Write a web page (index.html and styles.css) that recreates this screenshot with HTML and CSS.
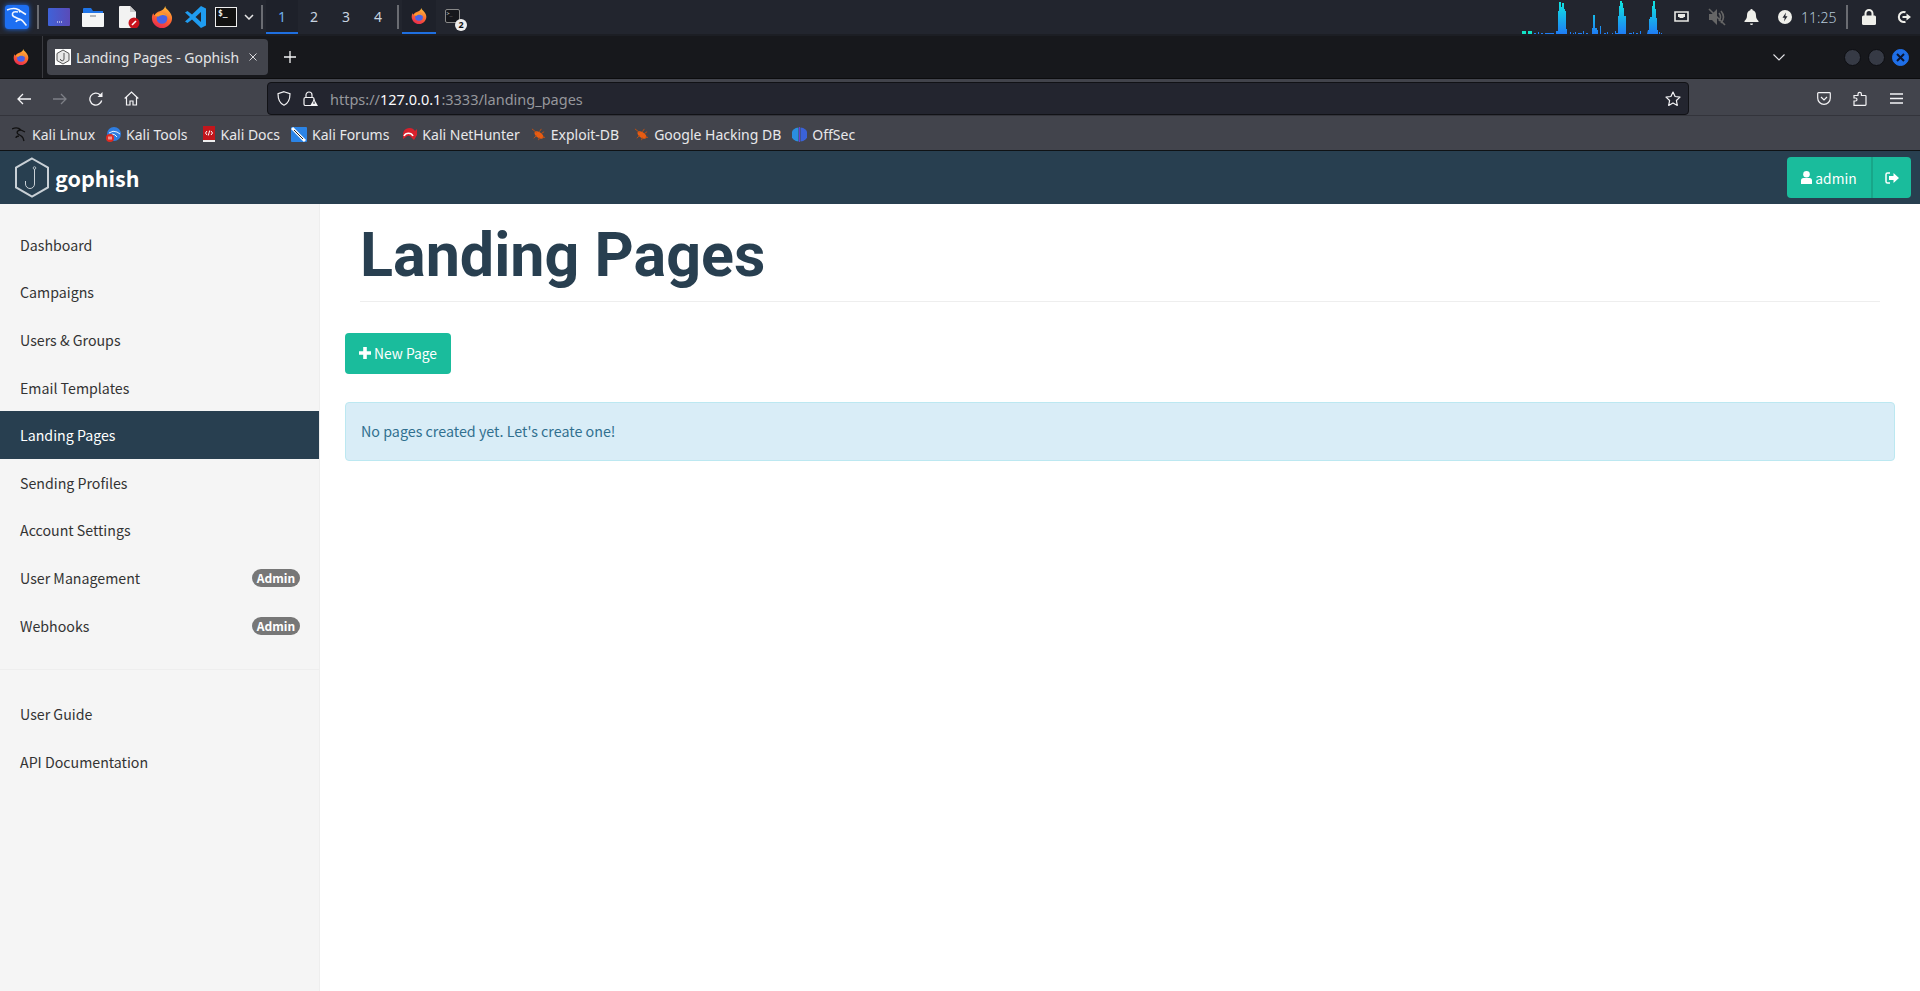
FILE: index.html

```html
<!DOCTYPE html>
<html lang="en">

<head>
    <meta charset="UTF-8">
    <meta name="viewport" content="width=device-width, initial-scale=1.0">
    <title>Landing Pages - Gophish</title>

    <link rel="stylesheet" href="styles.css">
</head>

<body>
    <!-- shared icons -->
    <svg class="defs" width="0" height="0">
        <defs>
            <linearGradient id="ffOuter" x1="0.7" y1="0" x2="0.3" y2="1">
                <stop offset="0" stop-color="#ffc23a" />
                <stop offset="0.5" stop-color="#ff6a30" />
                <stop offset="1" stop-color="#e8274f" />
            </linearGradient>
            <linearGradient id="barFill" x1="0" y1="0" x2="0" y2="1">
                <stop offset="0" stop-color="#10e8e0" />
                <stop offset="1" stop-color="#1f7cf5" />
            </linearGradient>
            <symbol id="firefox" viewBox="0 0 24 24">
                <path fill="url(#ffOuter)" d="M15.500 0c.2 2.800 2.800 3.500 4.800 6.500 1.300 1.900 2.700 4 2.700 6.500 0 6-4.900 11-11 11S1 19 1 13c0-2 .5-3.700 1.500-5.200.3 1 .8 1.700 1.500 2.200C5 8 7 6.500 9.500 5.800 12 5 14.800 3.200 15.500 0z" />
                <circle cx="12" cy="13.500" r="5.800" fill="#4a62e6" />
                <path fill="#ff9a2a" d="M4 10c2-2.500 5.500-3.500 8.500-2.700 3 .6 5 2.800 5.500 5-1.500-2-4-2.700-6.500-2.200-1 .2-2.200.3-3 1.400-1.800 0-3.500-.5-4.500-1.500z" />
            </symbol>
            <symbol id="roach" viewBox="0 0 16 16">
                <ellipse cx="8.500" cy="8.500" rx="5.500" ry="3" transform="rotate(35 8.500 8.500)" fill="#e85c12" />
                <path d="M1 2l5 4M3 12l3-3M8 14l1-3M14 5l-3 2M11 2L9 5M15 11h-3" stroke="#c5500f" stroke-width="1" fill="none" />
            </symbol>
        </defs>
    </svg>

    <!-- desktop panel -->
    <div class="panel">
        <div class="panel-left">
            <span class="launcher launcher-kali">
                <svg width="24" height="24" viewBox="0 0 24 24">
                    <rect width="24" height="24" rx="3" fill="#1d6ff2" />
                    <path d="M2 5c5-2 8-2 11-.5 2 1 4 3 8 5M14 4.500l1 3M13 7c-4-1-6 .5-5.500 3 .5 2.500 6 3 9 5 2 1.400 3 3.500 5 5.500M15 15c-2-.5-3.500.5-4 2" fill="none" stroke="#f2f7ff" stroke-width="1.600" />
                </svg>
            </span>
            <span class="panel-sep sep-first"></span>
            <span class="launcher launcher-screen">
                <svg width="22" height="18" viewBox="0 0 22 18">
                    <defs>
                        <linearGradient id="screenFill" x1="0" y1="0" x2="1" y2="0">
                            <stop offset="0" stop-color="#3f62d8" />
                            <stop offset="1" stop-color="#5a4bb8" />
                        </linearGradient>
                    </defs>
                    <rect width="22" height="18" rx="1" fill="url(#screenFill)" />
                    <path d="M9 14h1M11 14h1M13 14h1" stroke="#fff" stroke-width="1.200" />
                </svg>
            </span>
            <span class="launcher launcher-folder">
                <svg width="22" height="20" viewBox="0 0 22 20">
                    <path d="M1 2q0-1 1-1h7l2 3h10v3H1z" fill="#1f74e8" />
                    <path d="M0 6h22v13q0 1-1 1H1q-1 0-1-1z" fill="#f4f5f5" />
                    <path d="M8 9h6" stroke="#8b8f94" stroke-width="1.200" />
                </svg>
            </span>
            <span class="launcher launcher-file">
                <svg width="22" height="22" viewBox="0 0 22 22">
                    <path d="M1 1q0-1 1-1h10l6 6v15q0 1-1 1H2q-1 0-1-1z" fill="#f2f2f2" />
                    <path d="M12 0l6 6h-6z" fill="#c8c8c8" />
                    <circle cx="16" cy="17" r="5.500" fill="#c9131c" />
                    <path d="M14 19l4-4" stroke="#fff" stroke-width="1.600" />
                </svg>
            </span>
            <span class="launcher launcher-ff">
                <svg width="22" height="22"><use href="#firefox" /></svg>
            </span>
            <span class="launcher launcher-code">
                <svg width="22" height="22" viewBox="0 0 22 22">
                    <path d="M16 0l5 2.500v17L16 22 7 13.500 2.500 17 0 15.500 5 11 0 6.500 2.500 5 7 8.500zM16 6l-5.500 5 5.500 5z" fill="#1f9cf0" />
                </svg>
            </span>
            <span class="launcher launcher-term">$_</span>
            <svg class="panel-chevron" width="10" height="6" viewBox="0 0 10 6">
                <path d="M1 1l4 4 4-4" fill="none" stroke="#e6e6e6" stroke-width="1.500" />
            </svg>
            <span class="panel-sep sep-second"></span>
            <div class="workspaces">
                <span class="workspace workspace-active">1</span>
                <span class="workspace">2</span>
                <span class="workspace">3</span>
                <span class="workspace">4</span>
            </div>
            <span class="panel-sep sep-third"></span>
            <span class="window-btn window-btn-active">
                <svg width="16" height="16"><use href="#firefox" /></svg>
            </span>
            <span class="window-btn window-btn-term">
                <span class="term-mini">&gt;_</span>
                <span class="term-count">2</span>
            </span>
        </div>
        <div class="panel-right">
            <svg class="cpu-graph" width="140" height="34" viewBox="0 0 140 34">
                <path fill="#12e3c6" d="M0 31h4v3H0zM6 31h4v3H6z" />
                <path fill="url(#barFill)" d="M12 33h2v1h-2zM16 32h1v2h-1zM19 33h2v1h-2zM23 33h9v1h-9zM34 31h2v-20h1V2h2v5h1V3h2v6h1v2h1v18h1v5H34zM48 32h1v2h-1zM51 33h1v1h-1zM53 32h1v2h-1zM56 33h4v1h-4zM61 31h1v3h-1zM64 33h2v1h-2zM70 28h1V15h2v13h2v6h-5zM75 30h1v4h-1zM78 26h1v8h-1zM82 33h2v1h-2zM85 32h1v2h-1zM90 33h1v1h-1zM93 31h1v3h-1zM94 33h2v-17h1V6h1V1h2v2h1v5h1v8h2v18h-11zM107 33h3v1h-3zM111 32h1v2h-1zM114 33h2v1h-2zM118 31h1v3h-1zM126 30h1v-11h1v-2h2V6h1V1h2v8h1v9h1v12h1v4h-11zM137 32h1v2h-1zM139 33h1v1h-1z" />
            </svg>
            <svg class="tray-icon tray-net" width="15" height="13" viewBox="0 0 15 13">
                <path d="M1 1h13v9H1z" fill="none" stroke="#e8e8e4" stroke-width="1.600" />
                <path d="M4 3h7v3H9.500v1h-4V6H4z" fill="#e8e8e4" />
            </svg>
            <svg class="tray-icon tray-mute" width="18" height="18" viewBox="0 0 18 18">
                <path d="M1 6h3l5-5v16l-5-5H1z" fill="#666" />
                <path d="M11 5q3 4 0 8M13 3q5 6 0 12M1 1l16 16" fill="none" stroke="#666" stroke-width="1.600" />
            </svg>
            <svg class="tray-icon tray-bell" width="15" height="16" viewBox="0 0 15 16">
                <path d="M7.500 0q1.200 0 1.200 1.300c2.500.7 3.300 2.800 3.300 5.200 0 2.500.8 3.900 2.500 5.500v1H.5v-1C2.200 10.400 3 9 3 6.500c0-2.400.8-4.500 3.300-5.200Q6.300 0 7.500 0zM6 14.500h3a1.500 1.500 0 0 1-3 0z" fill="#efefea" />
            </svg>
            <svg class="tray-icon tray-power" width="14" height="14" viewBox="0 0 14 14">
                <circle cx="7" cy="7" r="7" fill="#efefea" />
                <path d="M8 2.500L4.500 7.800h2.200L6 11.500l3.500-5.300H7.300z" fill="#23262f" />
            </svg>
            <span class="tray-clock">11:25</span>
            <span class="panel-sep sep-tray"></span>
            <svg class="tray-icon tray-lock" width="14" height="16" viewBox="0 0 14 16">
                <path d="M3.500 7V4.500a3.500 3.500 0 0 1 7 0V7" fill="none" stroke="#efefea" stroke-width="2" />
                <rect y="6.500" width="14" height="9.500" rx="1.500" fill="#efefea" />
            </svg>
            <svg class="tray-icon tray-logout" width="14" height="14" viewBox="0 0 14 14">
                <path d="M8.500 2.300a5 5 0 1 0 0 9.400" fill="none" stroke="#efefea" stroke-width="2" />
                <path d="M5.500 6h4V3.500L14 7l-4.500 3.500V8h-4z" fill="#efefea" />
            </svg>
        </div>
    </div>

    <!-- browser tab strip -->
    <div class="tabstrip">
        <span class="tabstrip-ff">
            <svg width="16" height="16"><use href="#firefox" /></svg>
        </span>
        <div class="tab">
            <span class="tab-favicon">
                <svg width="16" height="16" viewBox="0 0 16 16">
                    <rect width="16" height="16" fill="#fff" />
                    <path d="M8 1l6 3.500v7L8 15l-6-3.500v-7z" fill="#e8e8e8" stroke="#555" stroke-width="1" />
                    <path d="M9 4v6a1.800 1.800 0 0 1-3.600 0" fill="none" stroke="#555" stroke-width="1" />
                </svg>
            </span>
            <span class="tab-title">Landing Pages - Gophish</span>
            <svg class="tab-close" width="8" height="8" viewBox="0 0 8 8">
                <path d="M.5.500l7 7M7.500.500l-7 7" stroke="#d8d8dc" stroke-width="1" />
            </svg>
        </div>
        <svg class="tab-new" width="12" height="12" viewBox="0 0 12 12">
            <path d="M6 0v12M0 6h12" stroke="#f4f4f6" stroke-width="1.300" />
        </svg>
        <svg class="tab-list" width="12" height="7" viewBox="0 0 12 7">
            <path d="M.5.500L6 6 11.500.500" fill="none" stroke="#e4e4e8" stroke-width="1.100" />
        </svg>
        <div class="win-controls">
            <span class="win-dot"></span>
            <span class="win-dot"></span>
            <span class="win-dot win-dot-close">
                <svg width="9" height="9" viewBox="0 0 9 9">
                    <path d="M1 1l7 7M8 1L1 8" stroke="#0b1530" stroke-width="2" />
                </svg>
            </span>
        </div>
    </div>

    <!-- navigation toolbar -->
    <div class="toolbar">
        <svg class="tool tool-back" width="14" height="12" viewBox="0 0 14 12">
            <path d="M14 6H1M6 1L1 6l5 5" fill="none" stroke="#f4f4f6" stroke-width="1.300" />
        </svg>
        <svg class="tool tool-forward" width="14" height="12" viewBox="0 0 14 12">
            <path d="M0 6h13M8 1l5 5-5 5" fill="none" stroke="#7d7f86" stroke-width="1.300" />
        </svg>
        <svg class="tool tool-reload" width="14" height="14" viewBox="0 0 14 14">
            <path d="M12.700 8.500A6 6 0 1 1 11 2.700" fill="none" stroke="#f4f4f6" stroke-width="1.300" />
            <path d="M13.500 0v5h-5z" fill="#f4f4f6" />
        </svg>
        <svg class="tool tool-home" width="15" height="15" viewBox="0 0 15 15">
            <path d="M.7 7.500L7.500 1l6.800 6.500M2.500 6v8h3.500v-4h3v4h3.500V6" fill="none" stroke="#f4f4f6" stroke-width="1.200" />
        </svg>
        <div class="urlbar">
            <svg class="url-shield" width="14" height="15" viewBox="0 0 14 15">
                <path d="M7 .7l6 2c0 5.500-1.500 9.500-6 11.500C2.500 12.200 1 8.200 1 2.700z" fill="none" stroke="#f4f4f6" stroke-width="1.200" />
            </svg>
            <svg class="url-lock" width="15" height="15" viewBox="0 0 15 15">
                <path d="M3 7V4a3 3 0 0 1 6 0v3" fill="none" stroke="#f4f4f6" stroke-width="1.200" />
                <rect x="1" y="6.500" width="10" height="8" rx="1.500" fill="none" stroke="#f4f4f6" stroke-width="1.200" />
                <path d="M11 8l4 7H7z" fill="#f4f4f6" />
                <path d="M11 10.500v2.500" stroke="#23252f" stroke-width="1" />
            </svg>
            <span class="url-text"><span class="url-dim">https://</span>127.0.0.1<span class="url-dim">:3333/landing_pages</span></span>
            <svg class="url-star" width="16" height="15" viewBox="0 0 16 15">
                <path d="M8 1l2.100 4.500 4.900.6-3.600 3.400.9 4.900L8 11.900l-4.300 2.500.9-4.900L1 6.100l4.900-.6z" fill="none" stroke="#f4f4f6" stroke-width="1.200" stroke-linejoin="round" />
            </svg>
        </div>
        <svg class="tool tool-pocket" width="14" height="13" viewBox="0 0 14 13">
            <path d="M1.500.700h11q.8 0 .8.800v4.500a6.300 6.300 0 0 1-12.600 0V1.500q0-.8.800-.8z" fill="none" stroke="#f4f4f6" stroke-width="1.200" />
            <path d="M4 5l3 3 3-3" fill="none" stroke="#f4f4f6" stroke-width="1.200" />
        </svg>
        <svg class="tool tool-ext" width="14" height="15" viewBox="0 0 14 15">
            <path d="M1 14.300V10h1.500a1.500 1.500 0 0 0 0-3H1V4.500h4V3a1.700 1.700 0 0 1 3.400 0v1.500h3.900a.7.700 0 0 1 .7.700v8.400a.7.700 0 0 1-.7.700z" fill="none" stroke="#f4f4f6" stroke-width="1.200" />
        </svg>
        <svg class="tool tool-menu" width="13" height="11" viewBox="0 0 13 11">
            <path d="M0 1h13M0 5.500h13M0 10h13" stroke="#f4f4f6" stroke-width="1.300" />
        </svg>
    </div>

    <!-- bookmarks toolbar -->
    <div class="bookmarks">
        <a class="bookmark bm-linux">
            <svg width="15" height="15" viewBox="0 0 15 15">
                <path d="M0 2c4-2 7-1 9 1l4 2M9 3C6 3 4 5 6 7c2 1 4 2 5 4l1 3M7 9c-2 0-3 1-3 2" fill="none" stroke="#111" stroke-width="1.300" />
            </svg>
            Kali Linux
        </a>
        <a class="bookmark bm-tools">
            <svg width="15" height="15" viewBox="0 0 15 15">
                <circle cx="8" cy="7" r="7" fill="#2f7de0" />
                <path d="M3 6q4-3 8-1l3 2M6 7q3 0 5 3" fill="none" stroke="#e8f3ff" stroke-width="1" />
                <circle cx="4" cy="11" r="4" fill="#e02b20" />
                <path d="M3 9.500v3M5 9.500v3" stroke="#fff" stroke-width="1" />
            </svg>
            Kali Tools
        </a>
        <a class="bookmark bm-docs">
            <svg width="15" height="16" viewBox="0 0 15 16">
                <rect x="2" width="12" height="14" fill="#c3161c" />
                <rect x="2" y="14" width="12" height="2" fill="#eee" />
                <path d="M6 5L4.500 7 6 9M10 5l1.500 2L10 9M8.700 4.500L7.300 9.500" fill="none" stroke="#fff" stroke-width="1" />
            </svg>
            Kali Docs
        </a>
        <a class="bookmark bm-forums">
            <svg width="16" height="15" viewBox="0 0 16 15">
                <rect width="16" height="15" rx="1" fill="#2b84e6" />
                <path d="M1 1l13 13" stroke="#fff" stroke-width="3" />
                <path d="M3 3l9 9" stroke="#222" stroke-width="1" />
            </svg>
            Kali Forums
        </a>
        <a class="bookmark bm-hunter">
            <svg width="15" height="14" viewBox="0 0 15 14">
                <path d="M1 7a6.500 6.500 0 0 1 12-3l2-2v6l-3 5-3-3a3 3 0 0 0-5 0l-3 2z" fill="#d8202c" />
                <path d="M2 9a5 5 0 0 1 9 0" fill="none" stroke="#fff" stroke-width="1.500" />
            </svg>
            Kali NetHunter
        </a>
        <a class="bookmark bm-exploit">
            <svg width="15" height="15"><use href="#roach" /></svg>
            Exploit-DB
        </a>
        <a class="bookmark bm-ghdb">
            <svg width="15" height="15"><use href="#roach" /></svg>
            Google Hacking DB
        </a>
        <a class="bookmark bm-offsec">
            <svg width="15" height="15" viewBox="0 0 15 15">
                <path d="M6.500.500v14A7 7 0 0 1 6.500.500z" fill="#2a8ee0" />
                <path d="M8.500.500v14a7 7 0 0 0 0-14z" fill="#3a62d8" />
                <path d="M7.500 0v15" stroke="#6a3fd0" stroke-width="1" />
            </svg>
            OffSec
        </a>
    </div>

    <!-- gophish navbar -->
    <nav class="navbar">
        <a class="brand">
            <svg width="36" height="41" viewBox="0 0 36 41">
                <path d="M18 1.500l16 9.200v19.600l-16 9.200-16-9.200V10.700z" fill="none" stroke="#c9d0d6" stroke-width="2" />
                <path d="M20.500 12v15a4.500 4.500 0 0 1-9 0v-3" fill="none" stroke="#c9d0d6" stroke-width="1" />
                <circle cx="20.500" cy="11" r="1.300" fill="none" stroke="#c9d0d6" stroke-width="0.800" />
            </svg>
            <span class="brand-name">gophish</span>
        </a>
        <div class="user-group">
            <button class="user-btn user-btn-name">
                <svg width="11" height="13" viewBox="0 0 11 13">
                    <circle cx="5.500" cy="3.300" r="3.300" fill="#fff" />
                    <path d="M0 13V9.500Q0 7 2.500 7h6Q11 7 11 9.500V13z" fill="#fff" />
                </svg>
                admin
            </button>
            <button class="user-btn user-btn-logout">
                <svg width="14" height="12" viewBox="0 0 14 12">
                    <path d="M5 1H2.500Q1 1 1 2.500v7Q1 11 2.500 11H5" fill="none" stroke="#fff" stroke-width="1.500" />
                    <path d="M4 4h4.500V1L14 6l-5.500 5V8H4z" fill="#fff" />
                </svg>
            </button>
        </div>
    </nav>

    <div class="app">
        <aside class="sidebar">
            <ul class="side-nav">
                <li><a>Dashboard</a></li>
                <li><a>Campaigns</a></li>
                <li><a>Users &amp; Groups</a></li>
                <li><a>Email Templates</a></li>
                <li class="active"><a>Landing Pages</a></li>
                <li><a>Sending Profiles</a></li>
                <li><a>Account Settings</a></li>
                <li><a>User Management <span class="badge">Admin</span></a></li>
                <li><a>Webhooks <span class="badge">Admin</span></a></li>
            </ul>
            <ul class="side-nav side-nav-help">
                <li><a>User Guide</a></li>
                <li><a>API Documentation</a></li>
            </ul>
        </aside>

        <main class="content">
            <h1 class="page-header">Landing Pages</h1>
            <button class="btn-new">
                <svg width="12" height="12" viewBox="0 0 12 12">
                    <path d="M6 0v12M0 6h12" stroke="#fff" stroke-width="3.600" />
                </svg>
                New Page
            </button>
            <div class="alert">No pages created yet. Let's create one!</div>
        </main>
    </div>
</body>

</html>
```

FILE: styles.css

```css
* {
    box-sizing: border-box;
}

html, body {
    height: 100%;
}

body {
    margin: 0;
    overflow: hidden;
    display: flex;
    flex-direction: column;
    font-family: "Noto Sans CJK JP", "Noto Sans", sans-serif;
    background-color: #fff;
}

svg {
    display: block;
    flex-shrink: 0;
}

.defs {
    position: absolute;
}

/* desktop panel */
.panel {
    height: 34px;
    display: flex;
    justify-content: space-between;
    background-color: #22252e;
    font-family: "Noto Sans", sans-serif;
}

.panel-left, .panel-right {
    display: flex;
    align-items: center;
}

.launcher {
    display: flex;
    align-items: center;
    justify-content: center;
}

.launcher-kali {
    margin-left: 5px;
    box-shadow: 0 0 5px #1d6ff2;
    border-radius: 3px;
}

.panel-sep {
    width: 2px;
    height: 24px;
    background-color: #6a6c72;
}

.sep-first {
    margin-left: 8px;
}

.launcher-screen {
    margin-left: 9px;
}

.launcher-folder {
    margin-left: 12px;
}

.launcher-file {
    margin-left: 14px;
}

.launcher-ff {
    margin-left: 11px;
}

.launcher-code {
    margin-left: 12px;
}

.launcher-term {
    margin-left: 8px;
    width: 22px;
    height: 20px;
    background-color: #111;
    border: 1px solid #eee;
    color: #eee;
    font-family: "DejaVu Sans Mono", monospace;
    font-size: 8px;
    font-weight: bold;
    align-items: flex-start;
    justify-content: flex-start;
    padding: 1px 0 0 2px;
}

.panel-chevron {
    margin-left: 7px;
}

.sep-second {
    margin-left: 7px;
}

.workspaces {
    display: flex;
    margin-left: 3px;
}

.workspace {
    width: 32px;
    height: 34px;
    display: flex;
    align-items: center;
    justify-content: center;
    color: #c8d4e0;
    font-size: 14px;
    border-bottom: 2px solid transparent;
    padding-top: 1px;
}

.workspace-active {
    color: #6fb0ee;
    border-bottom-color: #1f6fe0;
    background-color: #1e212a;
}

.sep-third {
    margin-left: 3px;
}

.window-btn {
    width: 34px;
    height: 34px;
    display: flex;
    align-items: center;
    justify-content: center;
    border-bottom: 2px solid transparent;
}

.window-btn-active {
    margin-left: 3px;
    background-color: #1e212a;
    border-bottom-color: #1f6fe0;
}

.window-btn-term {
    margin-left: 0;
    position: relative;
}

.term-mini {
    width: 15px;
    height: 14px;
    border: 1px solid #888;
    border-radius: 2px;
    background-color: #16171c;
    color: #ccc;
    font-family: "DejaVu Sans Mono", monospace;
    font-size: 5px;
    line-height: 7px;
    padding-left: 1px;
    margin-right: 2px;
}

.term-count {
    position: absolute;
    left: 19px;
    top: 19px;
    width: 12px;
    height: 12px;
    border-radius: 50%;
    background-color: #eee;
    color: #111;
    font-size: 9px;
    font-weight: bold;
    line-height: 12px;
    text-align: center;
}

.cpu-graph {
    margin-right: 11px;
}

.tray-net {
    margin-left: 1px;
}

.tray-mute {
    margin-left: 19px;
}

.tray-bell {
    margin-left: 18px;
}

.tray-power {
    margin-left: 19px;
}

.tray-clock {
    margin-left: 9px;
    color: #b6c8d8;
    font-size: 14px;
    font-weight: 300;
    width: 33px;
}

.sep-tray {
    margin-left: 12px;
}

.tray-lock {
    margin-left: 14px;
}

.tray-logout {
    margin-left: 21px;
    margin-right: 9px;
}

/* tab strip */
.tabstrip {
    height: 45px;
    display: flex;
    align-items: center;
    background-color: #17181c;
    border-top: 2px solid #1c1e24;
    border-bottom: 1px solid #0c0c0e;
    font-family: "Noto Sans", sans-serif;
}

.tabstrip-ff {
    width: 43px;
    height: 100%;
    display: flex;
    align-items: center;
    justify-content: center;
    border-right: 1px solid #3a3b40;
}

.tab {
    width: 221px;
    height: 36px;
    margin-left: 4px;
    display: flex;
    align-items: center;
    padding: 0 11px 0 8px;
    background-color: #42444c;
    border-radius: 4px;
}

.tab-title {
    margin-left: 5px;
    flex: 1;
    color: #e4e4e6;
    font-size: 14px;
}

.tab-new {
    margin-left: 16px;
}

.tab-list {
    margin-left: auto;
}

.win-controls {
    display: flex;
    gap: 7px;
    margin-left: 59px;
    margin-right: 11px;
}

.win-dot {
    width: 17px;
    height: 17px;
    border-radius: 50%;
    background-color: #363a45;
    border: 1px solid #0d0e12;
    display: flex;
    align-items: center;
    justify-content: center;
}

.win-dot-close {
    background-color: #1f6fe8;
    border-color: #1f6fe8;
}

/* toolbar */
.toolbar {
    height: 36px;
    display: flex;
    align-items: center;
    background-color: #42444c;
    padding-top: 3px;
}

.tool-back {
    margin-left: 17px;
}

.tool-forward {
    margin-left: 22px;
}

.tool-reload {
    margin-left: 22px;
}

.tool-home {
    margin-left: 21px;
}

.urlbar {
    width: 1422px;
    height: 33px;
    margin-left: 128px;
    display: flex;
    align-items: center;
    padding: 0 7px 0 9px;
    background-color: #23252f;
    border: 1px solid #111216;
    border-radius: 4px;
}

.url-lock {
    margin-left: 12px;
}

.url-text {
    margin-left: 12px;
    flex: 1;
    color: #fbfbfe;
    font-family: "Noto Sans", sans-serif;
    font-size: 14.5px;
    padding-top: 1px;
}

.url-dim {
    color: #96979c;
}

.tool-pocket {
    margin-left: 128px;
}

.tool-ext {
    margin-left: 22px;
}

.tool-menu {
    margin-left: 23px;
}

/* bookmarks */
.bookmarks {
    height: 35px;
    display: flex;
    align-items: center;
    padding-left: 12px;
    background-color: #42444c;
    border-top: 1px solid #33343b;
    font-family: "Noto Sans", sans-serif;
}

.bookmark {
    display: flex;
    align-items: center;
    gap: 5px;
    color: #e8e8ea;
    font-size: 14px;
    line-height: 17px;
    padding-top: 2px;
}

.bm-tools {
    margin-left: 11px;
}

.bm-docs {
    margin-left: 13px;
}

.bm-forums {
    margin-left: 11px;
}

.bm-hunter {
    margin-left: 13px;
}

.bm-exploit {
    margin-left: 11px;
}

.bm-ghdb {
    margin-left: 15px;
}

.bm-offsec {
    margin-left: 11px;
}

/* gophish navbar */
.navbar {
    height: 54px;
    display: flex;
    align-items: center;
    justify-content: space-between;
    padding: 0 9px 0 14px;
    background-color: #283f50;
    border-top: 1px solid #0f1215;
}

.brand {
    display: flex;
    align-items: center;
    gap: 5px;
    color: #fff;
}

.brand-name {
    font-size: 21.5px;
    font-weight: bold;
    line-height: 24px;
}

.user-group {
    display: flex;
}

.user-btn {
    height: 41px;
    display: flex;
    align-items: center;
    justify-content: center;
    gap: 3px;
    border: none;
    background-color: #1abc9c;
    color: #fff;
    font-family: inherit;
    font-size: 13.800px;
    padding: 0;
}

.user-btn-name {
    width: 86px;
    border-radius: 4px 0 0 4px;
    border-right: 2px solid #18a689;
}

.user-btn-logout {
    width: 38px;
    border-radius: 0 4px 4px 0;
}

/* page body */
.app {
    flex: 1;
    display: flex;
    min-height: 0;
}

.sidebar {
    width: 320px;
    padding-top: 17px;
    background-color: #f5f5f5;
    border-right: 1px solid #eee;
}

.side-nav {
    list-style: none;
    margin: 0;
    padding: 0;
}

.side-nav-help {
    margin-top: 20px;
    padding-top: 20px;
    border-top: 1px solid #eee;
}

.side-nav li {
    height: 47.6px;
}

.side-nav a {
    height: 100%;
    display: flex;
    align-items: center;
    justify-content: space-between;
    padding: 0 19px 0 20px;
    color: #333;
    font-size: 14.200px;
}

.side-nav .active a {
    background-color: #283f50;
    color: #fff;
}

.badge {
    width: 48px;
    height: 18px;
    border-radius: 9px;
    background-color: #777;
    color: #fff;
    font-size: 12px;
    font-weight: bold;
    line-height: 18px;
    text-align: center;
}

.content {
    flex: 1;
    padding: 0 25px;
}

.page-header {
    margin: 0 15px 31px;
    padding: 10px 0 5px;
    border-bottom: 1px solid #eee;
    color: #283f50;
    font-family: Roboto, sans-serif;
    font-size: 61px;
    font-weight: 700;
    line-height: 82px;
}

.btn-new {
    height: 41px;
    width: 106px;
    display: flex;
    align-items: center;
    justify-content: center;
    gap: 3px;
    border: none;
    border-radius: 4px;
    background-color: #1abc9c;
    color: #fff;
    font-family: inherit;
    font-size: 13.800px;
    padding: 0 0 2px;
}

.alert {
    margin-top: 28px;
    height: 59px;
    display: flex;
    align-items: center;
    padding: 0 15px 2px;
    background-color: #d9edf7;
    border: 1px solid #bce8f1;
    border-radius: 4px;
    color: #31708f;
    font-size: 14.300px;
}
```
